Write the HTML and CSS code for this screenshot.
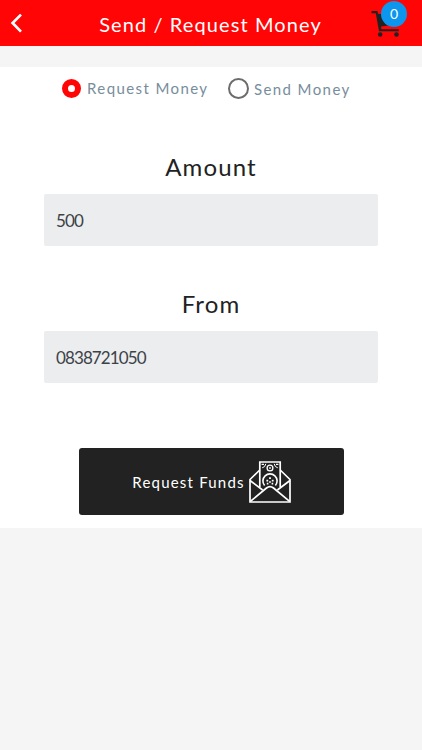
FILE: index.html
```html
<!DOCTYPE html>
<html lang="en">
<head>
  <title>Send / Request Money</title>
  <meta charset="utf-8" />
  <meta name="viewport" content="width=device-width, initial-scale=1" />
  <link rel="stylesheet" href="styles.css">
</head>
<body>
  <header class="header">
    <a class="back" aria-label="Back">
      <svg width="14" height="22" viewBox="0 0 14 22"><path d="M12 2.6 3.6 11l8.4 8.6" fill="none" stroke="#fff" stroke-width="2.7"/></svg>
    </a>
    <h1 class="title">Send / Request Money</h1>
    <a class="cart" aria-label="Cart">
      <svg width="30" height="28" viewBox="0 0 30 28" fill="#222">
        <path d="M.5 2h5.8l1 3H27l-2.5 10.5-14.5 2 .4 2.7h17.4v2.1H8L4.8 4.2H.5z"/>
        <circle cx="9.2" cy="25.5" r="2.3"/>
        <circle cx="25.5" cy="25.5" r="2.3"/>
      </svg>
      <span class="badge">0</span>
    </a>
  </header>
  <main class="content">
    <div class="options">
      <label class="option request"><span class="radio checked"></span><span class="option-text">Request Money</span></label>
      <label class="option send"><span class="radio"></span><span class="option-text">Send Money</span></label>
    </div>
    <label class="subtitle" for="amount">Amount</label>
    <input type="text" id="amount" class="field" value="500" />
    <label class="subtitle" for="from">From</label>
    <input type="text" id="from" class="field" value="0838721050" />
    <button class="submit">
      <span class="submit-text">Request Funds</span>
      <!-- banknote in an open envelope -->
      <svg width="42" height="42" viewBox="0 0 42 42" fill="none" stroke="#fff" stroke-width="1.7">
        <path d="M10.8 26V1h20.4v25"/>
        <path d="M10.8 9 1 18.5V41h40V18.5L31.2 9"/>
        <path d="M1 19.5 13.6 29M41 19.5 28.4 29"/>
        <path d="M1.4 40.4 17.5 27q3.5-2.8 7 0l16.1 13.4"/>
        <path d="M13.2 6.8q3-.5 3.6-4M28.8 6.8q-3-.5-3.6-4" stroke-width="1"/>
        <path d="M12.6 3.4h2.4M27 3.4h2.4" stroke-width="1.4"/>
        <circle cx="21" cy="7" r="2.9" stroke-width="1.3"/>
        <circle cx="21" cy="7" r=".7" stroke-width=".8"/>
        <path d="M15.6 24.6a7.1 7.1 0 1 1 10.8 0" stroke-width="1.6"/>
        <path d="M17.4 19.6h1.8M22.8 19.6h1.8M20.1 17.2h1.8M20.1 21h1.8M17.8 22.6h1.6M22.6 22.6h1.6" stroke-width="1.7"/>
      </svg>
    </button>
  </main>
</body>
</html>
```
FILE: styles.css
```css
*{
  box-sizing: border-box;
}
body{
  margin: 0;
  background-color: #f5f5f5;
  font-family: Lato, "Liberation Sans", sans-serif;
}
.header{
  display: flex;
  align-items: center;
  height: 46px;
  background-color: #ff0505;
}
.back{
  width: 50px;
  height: 22px;
  padding-left: 9px;
}
.back svg{
  display: block;
}
.title{
  flex: 1;
  margin: 2px 0 0;
  color: white;
  font-size: 20px;
  font-weight: 400;
  letter-spacing: 1.1px;
  line-height: 28px;
  text-align: center;
  white-space: nowrap;
}
.cart{
  position: relative;
  width: 51px;
  height: 28px;
}
.cart svg{
  display: block;
}
.badge{
  position: absolute;
  top: -8px;
  left: 10px;
  width: 26px;
  height: 26px;
  border-radius: 50%;
  background-color: #0c96ee;
  color: white;
  font-size: 14px;
  line-height: 26px;
  text-align: center;
}
.content{
  display: flex;
  flex-direction: column;
  align-items: center;
  height: 461px;
  margin-top: 21px;
  background-color: white;
}
.options{
  display: flex;
  align-self: stretch;
  height: 42px;
  padding-left: 62px;
}
.option{
  display: flex;
  align-items: center;
  color: #778d9c;
  font-size: 15px;
  letter-spacing: 1.4px;
  white-space: nowrap;
}
.request{
  width: 166px;
  gap: 6px;
}
.send{
  gap: 5px;
}
.send .option-text{
  margin-top: 2px;
}
.radio{
  width: 21px;
  height: 21px;
  border: 2px solid #6c6c6c;
  border-radius: 50%;
}
.radio.checked{
  width: 19px;
  height: 19px;
  border: 6.5px solid #ff0505;
}
.subtitle{
  margin-top: 43px;
  color: #222;
  font-size: 24px;
  letter-spacing: 1.1px;
  line-height: 30px;
}
.field{
  width: 334px;
  height: 52px;
  margin-top: 12px;
  padding: 0 12px;
  border: 0;
  border-radius: 2px;
  background-color: #ebedef;
  color: #3d4247;
  font-family: inherit;
  font-size: 17px;
  letter-spacing: -0.9px;
}
.submit{
  display: flex;
  justify-content: center;
  align-items: center;
  gap: 4px;
  width: 265px;
  height: 67px;
  margin-top: 65px;
  padding: 0 0 0 1px;
  border: 0;
  border-radius: 3px;
  background-color: #222;
  color: white;
  font-family: inherit;
  font-size: 15px;
  letter-spacing: 1.2px;
}
```
